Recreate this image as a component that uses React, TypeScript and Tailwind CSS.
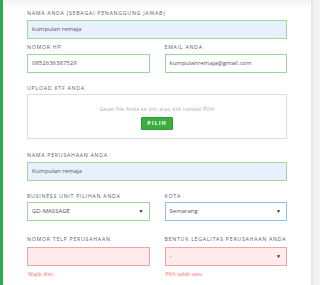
export default function App() {
  const label = "block h-[8px] text-[5.3px] leading-[8px] tracking-[0.7px] uppercase text-[#5a6070] whitespace-nowrap";
  const input = "h-[19px] flex items-center px-[4px] text-[6px] text-[#555] border";
  const arrow = <span className="ml-auto text-[5px] text-[#222]">▼</span>;

  return (
    <div className="w-[320px] h-[285px] flex overflow-hidden" style={{ fontFamily: '"Open Sans", "Liberation Sans", sans-serif' }}>
      <div className="w-[3px] bg-[#2fa84f]" />
      <div className="flex-1 bg-[linear-gradient(to_bottom,#f3f3f3,#ffffff_8px)] px-[24px] pt-[9px]">
        <span className={label}>Nama Anda (Sebagai Penanggung Jawab)</span>
        <div className={`${input} mt-[3px] bg-[#e8f0fe] border-[#9fd59f]`}>kumpulan remaja</div>

        <div className="grid grid-cols-2 gap-x-[15px] mt-[4px]">
          <div>
            <span className={label}>Nomor HP</span>
            <div className={`${input} mt-[3px] bg-white border-[#9fd59f]`}>0852636387529</div>
          </div>
          <div>
            <span className={label}>Email Anda</span>
            <div className={`${input} mt-[3px] bg-white border-[#9fd59f]`}>kumpulanremaja@gmail.com</div>
          </div>
        </div>

        <span className={`${label} mt-[11px]`}>Upload KTF Anda</span>
        <div className="mt-[2px] h-[45px] border border-[#dcdde3] bg-white flex flex-col items-center pt-[11px]">
          <span className="text-[5px] tracking-[0.3px] text-[#a9a9a9] leading-[7px]">Geser file Anda ke sini atau klik tombol Pilih</span>
          <button className="mt-[4px] w-[32px] h-[13px] bg-[#3aae3e] border border-[#2f9a33] rounded-[1px] text-white text-[5.5px] font-bold tracking-[1px] flex items-center justify-center">
            PILIH
          </button>
        </div>

        <span className={`${label} mt-[12px]`}>Nama Perusahaan Anda</span>
        <div className={`${input} mt-[3px] bg-[#e8f0fe] border-[#9fd59f]`}>Kumpulan remaja</div>

        <div className="grid grid-cols-2 gap-x-[15px] mt-[11px]">
          <div>
            <span className={label}>Business Unit Pilihan Anda</span>
            <div className={`${input} mt-[2px] bg-white border-[#9fd59f] pr-[5px]`}>GD-MASSAGE{arrow}</div>
          </div>
          <div>
            <span className={label}>Kota</span>
            <div className={`${input} mt-[2px] bg-white border-[#90bfe6] pr-[5px]`}>Semarang{arrow}</div>
          </div>
        </div>

        <div className="grid grid-cols-2 gap-x-[15px] mt-[14px]">
          <div>
            <span className={label}>Nomor Telp Perusahaan</span>
            <div className={`${input} mt-[4px] bg-[#ffebeb] border-[#f4a3a3]`} />
            <span className="block mt-[4px] text-[5.3px] leading-[8px] text-[#f37070] pl-[1px]">Wajib diisi</span>
          </div>
          <div>
            <span className={label}>Bentuk Legalitas Perusahaan Anda</span>
            <div className={`${input} mt-[4px] bg-[#ffebeb] border-[#f4a3a3] pr-[5px]`}>-{arrow}</div>
            <span className="block mt-[4px] text-[5.3px] leading-[8px] text-[#f37070] pl-[1px]">Pilih salah satu</span>
          </div>
        </div>
      </div>
      <div className="w-[9px] bg-[linear-gradient(to_right,#e6e6e6,#f3f3f3_4px)]" />
    </div>
  );
}
